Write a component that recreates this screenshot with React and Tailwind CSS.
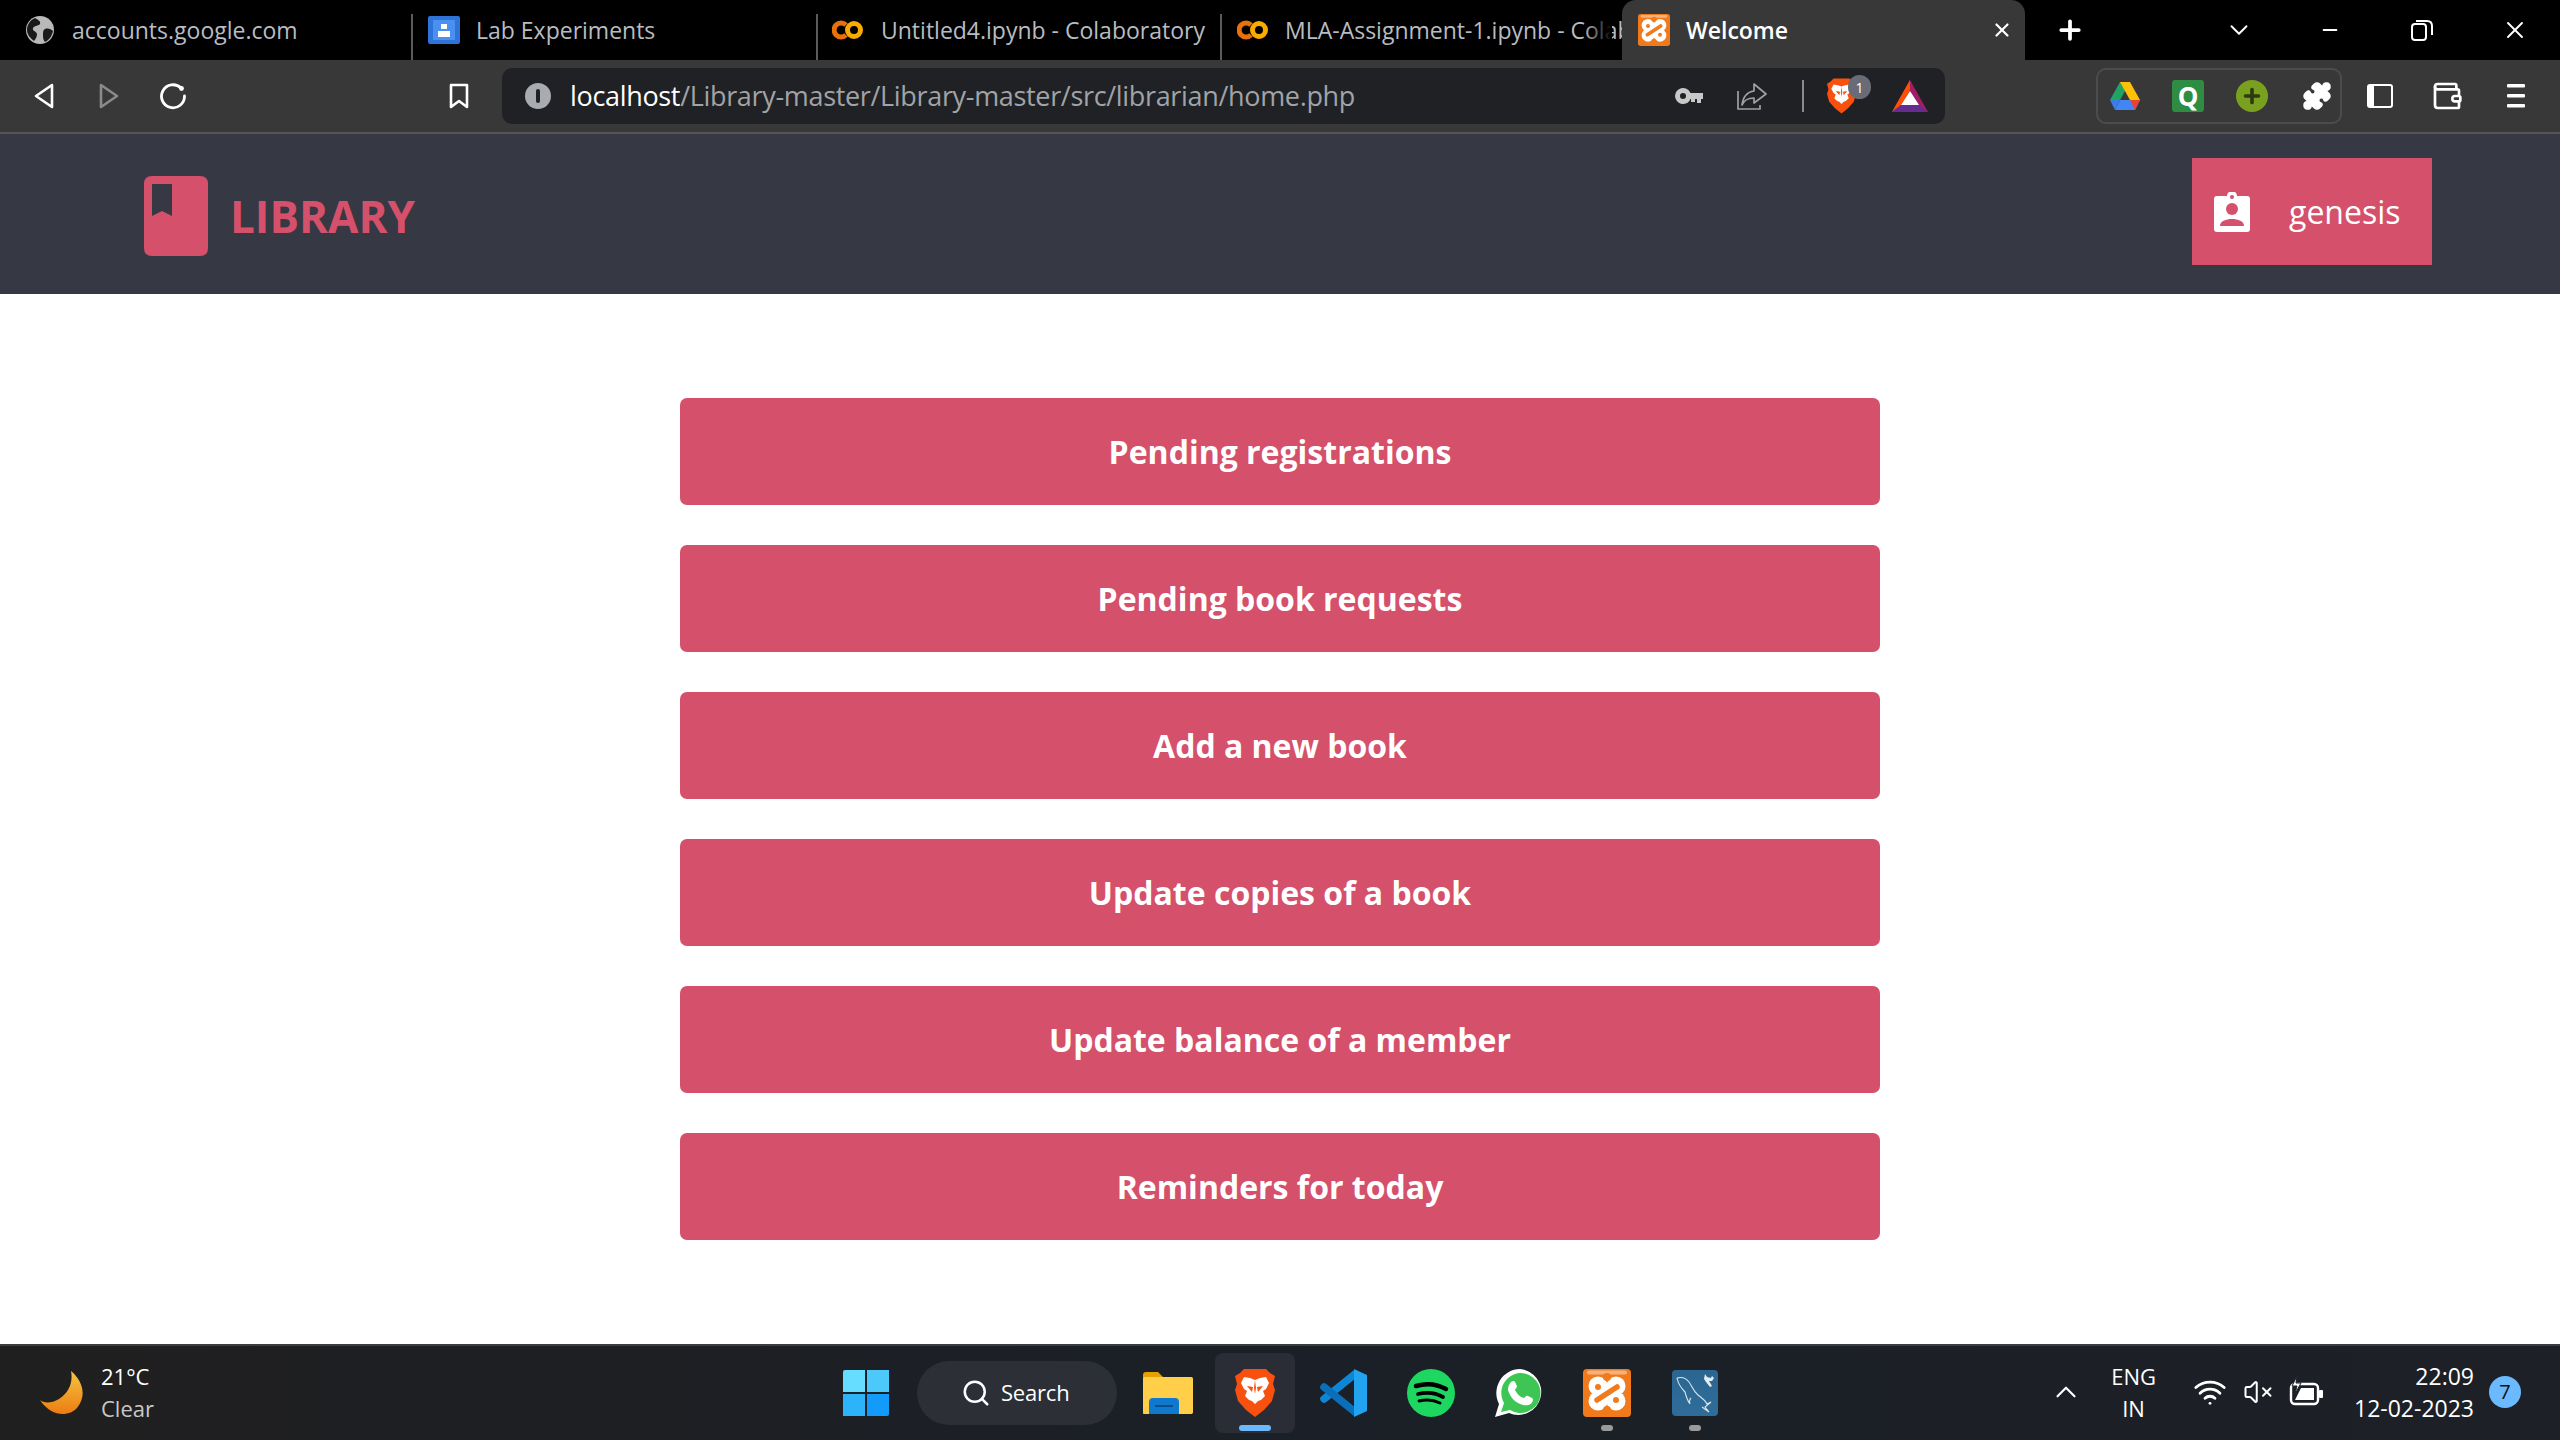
import { Plus, X, ChevronDown, ChevronUp, Minus, Search, Wifi, VolumeX, Puzzle, Wallet } from 'lucide-react';

const font = { open: 'font-["Open_Sans",sans-serif]' };

const Globe = () => (
  <svg viewBox="0 0 28 28" className="w-7 h-7 shrink-0">
    <circle cx="14" cy="14" r="14" fill="#b9b9b9" />
    <path d="M9 2c3 2 6 3 5 6-1 2-5 1-7 4-1 3 3 3 4 6 0 2-1 5-3 7-4-3-7-7-7-11C1 9 4 4 9 2zM19 13c3-1 6 0 8 2-1 5-4 9-8 11-2-2-2-5-2-7 0-3 0-5 2-6z" fill="#1a1a1a" />
  </svg>
);

const Contacts = () => (
  <svg viewBox="0 0 32 28" className="w-8 h-7 shrink-0">
    <rect width="32" height="28" rx="2" fill="#2f73d9" />
    <rect x="5" y="4" width="22" height="20" fill="#4a90f0" />
    <rect x="13" y="8" width="6" height="5" fill="#fff" />
    <rect x="10" y="15" width="12" height="6" fill="#fff" />
  </svg>
);

const Colab = () => (
  <svg viewBox="0 0 32 20" className="w-8 h-5 shrink-0" fill="none">
    <path d="M14 5a7 7 0 1 0 0 10" stroke="#e8710a" strokeWidth="5" />
    <circle cx="22" cy="10" r="6.5" stroke="#f9ab00" strokeWidth="5" />
  </svg>
);

const Xampp = ({ className }) => (
  <svg viewBox="0 0 48 48" className={className}>
    <rect width="48" height="48" rx="4" fill="#f07a1c" />
    <rect x="4" y="1.5" width="40" height="4" rx="2" fill="#f7b27c" />
    <g fill="#fff">
      <circle cx="15" cy="17" r="9.5" />
      <circle cx="33" cy="17" r="9.5" />
      <circle cx="15" cy="32" r="9.5" />
      <circle cx="33" cy="32" r="9.5" />
      <rect x="12" y="14" width="24" height="21" />
    </g>
    <g fill="#f07a1c">
      <circle cx="24" cy="8" r="4" />
      <circle cx="24" cy="41" r="4" />
      <circle cx="3.5" cy="24.5" r="3.5" />
      <circle cx="44.5" cy="24.5" r="3.5" />
      <circle cx="15" cy="18" r="3" />
      <circle cx="33" cy="31" r="3" />
    </g>
    <path d="M14 31L34 18" stroke="#f07a1c" strokeWidth="5.5" strokeLinecap="round" />
  </svg>
);

const Brave = ({ className }) => (
  <svg viewBox="0 0 40 48" className={className}>
    <path d="M9 0h22l4 4 5 3-2 8 2 6-3 11-8 9-9 7-9-7-8-9L0 21l2-6-2-8 5-3z" fill="#f8500f" />
    <path d="M9 8l6 1 5 2 5-2 6-1 3 6-3 6-3 2 2 5-4 4-3 1-3 3-3-3-3-1-4-4 2-5-3-2-3-6z" fill="#fff" />
    <path d="M12 17l6 1-1 5zM28 17l-6 1 1 5zM20 11v14l-1-6zM20 11v14l1-6z" fill="#f8500f" />
  </svg>
);

const Bat = () => (
  <svg viewBox="0 0 36 32" className="w-9 h-8 shrink-0">
    <path d="M18 0L36 32H0z" fill="#9e1f63" />
    <path d="M18 0L0 32l9-7 9-15z" fill="#ff5000" />
    <path d="M0 32h36l-9-7H9z" fill="#662d91" />
    <path d="M18 11l9 14H9z" fill="#fff" />
  </svg>
);

const Drive = () => (
  <svg viewBox="0 0 32 28" className="w-8 h-7 shrink-0">
    <path d="M11 0h10l-10 18H1z" fill="#1fa463" />
    <path d="M11 0h10l10 18H21z" fill="#ffc107" />
    <path d="M11 18h20l-5 10H6z" fill="#4285f4" />
    <path d="M1 18h10l-5 10z" fill="#3a7de8" />
    <path d="M21 18h10l-5 10z" fill="#ea4335" />
  </svg>
);

const Spotify = () => (
  <svg viewBox="0 0 48 48" className="w-12 h-12 shrink-0" fill="none">
    <circle cx="24" cy="24" r="24" fill="#1ed760" />
    <path d="M9 17c10-3 21-2 30 3" stroke="#000" strokeWidth="4.5" strokeLinecap="round" />
    <path d="M11 25c9-2 18-1 25 3" stroke="#000" strokeWidth="3.8" strokeLinecap="round" />
    <path d="M12 32c8-2 15-1 21 2" stroke="#000" strokeWidth="3" strokeLinecap="round" />
  </svg>
);

const Whatsapp = () => (
  <svg viewBox="0 0 48 48" className="w-12 h-12 shrink-0">
    <path d="M25 0a23 23 0 1 1-11 44L0 48l4-13A24 24 0 0 1 25 0z" fill="#fff" />
    <path d="M25 4a20 20 0 1 1-10 37l-9 2 3-9A20 20 0 0 1 25 4z" fill="#3ec654" />
    <path d="M18 12c2 0 2 1 4 5 0 2-2 3-2 4 2 4 5 7 9 8 1 0 2-3 4-2 4 2 5 2 5 4-1 5-6 6-10 5-8-2-13-8-15-15 0-5 3-9 5-9z" fill="#fff" />
  </svg>
);

const Mysql = () => (
  <svg viewBox="0 0 46 46" className="w-[46px] h-[46px] shrink-0" fill="none">
    <defs>
      <linearGradient id="mysql" x1="0" y1="0" x2="0" y2="1">
        <stop offset="0" stopColor="#2b6690" />
        <stop offset="1" stopColor="#2f6d99" />
      </linearGradient>
    </defs>
    <rect width="46" height="46" rx="4" fill="url(#mysql)" />
    <path d="M5 8c4-1 9 0 12 4 3 4 4 9 9 13 4 3 8 6 9 9l4-2-6 5 4 5-7-5M5 8c1 5 4 10 8 14 1 4 2 8 5 12-1-3 0-5 1-6" stroke="#d9e6ee" strokeWidth="1.1" />
    <path d="M33 4l2 3 4 1 1-2 2 2-2 3-3 0 3 5-2 1-4-5-2-3z" fill="#e4edf3" />
  </svg>
);

const Folder = () => (
  <svg viewBox="0 0 50 42" className="w-[50px] h-[42px] shrink-0">
    <path d="M0 3q0-3 3-3h12l5 5h27q3 0 3 3v31q0 3-3 3H0z" fill="#e6a100" />
    <rect y="5" width="50" height="37" rx="2" fill="#ffcf4a" />
    <path d="M6 42V30q0-4 4-4h22q4 0 4 4v12z" fill="#0f79d0" />
    <rect x="12" y="33" width="18" height="2" fill="#0a4f8c" />
  </svg>
);

const Moon = () => (
  <svg viewBox="0 0 45 44" className="w-[45px] h-11 shrink-0">
    <defs>
      <linearGradient id="moon" x1="0" y1="0" x2="0" y2="1">
        <stop offset="0" stopColor="#f5c542" />
        <stop offset="1" stopColor="#ec7c12" />
      </linearGradient>
    </defs>
    <path d="M31 0c12 10 16 25 6 37-8 9-26 9-37-8 3 3 11 4 19-1C30 21 33 10 31 0z" fill="url(#moon)" />
  </svg>
);

const Win = () => (
  <div className="grid grid-cols-2 gap-[2px] w-[46px] h-[46px] shrink-0">
    <div className="bg-[#66dcff] rounded-tl-[2px]" />
    <div className="bg-[#4cc8fb]" />
    <div className="bg-[#2cb4fb]" />
    <div className="bg-[#139bfb] rounded-br-[2px]" />
  </div>
);

const Vscode = () => (
  <svg viewBox="0 0 48 48" className="w-12 h-12 shrink-0" fill="none">
    <path d="M5 30L36 5" stroke="#0d86d6" strokeWidth="7.5" strokeLinecap="round" />
    <path d="M5 18l31 25" stroke="#0a6fb8" strokeWidth="7.5" strokeLinecap="round" />
    <path d="M35 0l13 6v36l-13 6z" fill="#22a3f0" />
  </svg>
);

const Tab = ({ icon, label, width, pad, divider, fade }) => (
  <div className={`flex items-center h-full relative ${width}`}>
    <div className={`flex items-center overflow-hidden w-full ${pad}`}>
      {icon}
      <span className="text-[23px] text-[#b9bcc0] whitespace-nowrap">{label}</span>
    </div>
    {fade && <div className="absolute right-[10px] top-0 bottom-0 w-[28px] bg-gradient-to-r from-transparent to-black" />}
    {divider && <div className="absolute right-0 top-[14px] bottom-0 w-[2px] bg-[#5b5b5b]" />}
  </div>
);

const TabBar = () => (
  <div className="h-[60px] bg-black flex items-stretch shrink-0">
    <Tab icon={<Globe />} label="accounts.google.com" width="w-[413px]" pad="pl-[26px] gap-[18px] pr-3" divider />
    <Tab icon={<Contacts />} label="Lab Experiments" width="w-[405px]" pad="pl-[15px] gap-[16px] pr-3" divider />
    <Tab icon={<Colab />} label="Untitled4.ipynb - Colaboratory" width="w-[404px]" pad="pl-[14px] gap-[17px] pr-2" divider />
    <Tab icon={<Colab />} label="MLA-Assignment-1.ipynb - Colab" width="w-[400px]" pad="pl-[15px] gap-[16px] pr-[10px]" fade />
    <div className="w-[403px] bg-[#383838] rounded-t-[14px] flex items-center pl-[16px] pr-[12px] gap-[16px]">
      <Xampp className="w-8 h-8 shrink-0" />
      <span className="text-[23px] font-semibold text-white flex-1">Welcome</span>
      <X size={22} strokeWidth={2.4} className="text-white" />
    </div>
    <div className="w-[30px]" />
    <Plus size={30} strokeWidth={3} className="text-white self-center" />
    <div className="flex-1 flex items-center justify-end pr-[31px]">
      <ChevronDown size={30} strokeWidth={1.5} className="text-white mr-[65px]" />
      <Minus size={22} strokeWidth={2} className="text-white mr-[70px]" />
      <svg viewBox="0 0 22 22" className="w-[22px] h-[22px] mr-[68px]" fill="none" stroke="#fff" strokeWidth="2">
        <rect x="1" y="5" width="14" height="16" rx="3" />
        <path d="M5 2h11q5 0 5 5v9" />
      </svg>
      <X size={28} strokeWidth={1.6} className="text-white" />
    </div>
  </div>
);

const Toolbar = () => (
  <div className="h-[74px] bg-[#383838] border-b-2 border-[#555] flex items-start pt-2 shrink-0">
    <div className="flex items-center h-14 pl-[34px] text-white">
      <svg viewBox="0 0 20 26" className="w-5 h-[26px]" fill="none" stroke="#fff" strokeWidth="2.6" strokeLinejoin="round">
        <path d="M18 2L2 13l16 11z" />
      </svg>
      <svg viewBox="0 0 20 26" className="w-5 h-[26px] ml-[45px]" fill="none" stroke="#8a8a8a" strokeWidth="2.6" strokeLinejoin="round">
        <path d="M2 2l16 11L2 24z" />
      </svg>
      <svg viewBox="0 0 28 28" className="w-7 h-7 ml-[40px]" fill="none" stroke="#fff" strokeWidth="2.8" strokeLinecap="round">
        <path d="M22 6A11.5 11.5 0 1 0 25.5 14" />
        <circle cx="22.5" cy="6.5" r="2.4" fill="#fff" stroke="none" />
      </svg>
      <svg viewBox="0 0 20 26" className="w-5 h-[26px] ml-[262px]" fill="none" stroke="#fff" strokeWidth="2.6" strokeLinejoin="round">
        <path d="M2 2h16v22l-8-6-8 6z" />
      </svg>
    </div>
    <div className="ml-[33px] w-[1443px] h-14 bg-[#202124] rounded-[10px] flex items-center pl-[23px]">
      <div className="w-[26px] h-[26px] rounded-full bg-[#a8abb0] flex items-center justify-center shrink-0">
        <div className="w-[4px] h-[14px] bg-[#202124] rounded-sm" />
      </div>
      <span className="ml-[19px] text-[27px] tracking-[-0.33px] text-[#a0a3a7] whitespace-nowrap w-[1105px]">
        <span className="text-white">localhost</span>/Library-master/Library-master/src/librarian/home.php
      </span>
      <svg viewBox="0 0 28 16" className="w-7 h-4 shrink-0" fill="#c8c8c8">
        <path d="M8 0a8 8 0 1 1-7.5 10.5A8 8 0 0 1 8 0zm0 5a3 3 0 1 0 0 6 3 3 0 0 0 0-6zM14 5h14v6h-2v4h-4v-4h-2v3h-4v-3h-2z" />
      </svg>
      <svg viewBox="0 0 30 28" className="w-[30px] h-7 ml-[34px] shrink-0" fill="none" stroke="#a0a0a0" strokeWidth="1.7" strokeLinejoin="round">
        <path d="M1 9v18h22v-4" />
        <path d="M17 2l12 10-12 9v-5c-6 0-10 2-12 7 1-8 5-13 12-14z" />
      </svg>
      <div className="w-[2px] h-8 bg-[#8a8a8a] ml-[35px] shrink-0" />
      <div className="relative ml-[23px] shrink-0">
        <Brave className="w-[29px] h-9" />
        <span className="absolute -top-[3px] -right-[15px] w-[23px] h-6 rounded-full bg-[#696b76] text-[14px] text-white flex items-center justify-center">1</span>
      </div>
      <div className="ml-[36px]"><Bat /></div>
    </div>
    <div className="ml-[151px] w-[246px] h-14 border-2 border-[#4c4c4c] rounded-[10px] flex items-center pl-[11px] shrink-0">
      <Drive />
      <div className="ml-[31px] w-8 h-8 bg-[#2f8c43] rounded-[3px] flex items-center justify-center text-white text-[26px] font-bold">Q</div>
      <div className="ml-[32px] w-8 h-8 rounded-full bg-[#7aa020] flex items-center justify-center">
        <Plus size={22} strokeWidth={4} className="text-[#2d3a12]" />
      </div>
      <Puzzle size={30} fill="#fff" className="ml-[34px] text-white" />
    </div>
    <div className="flex items-center h-14 text-white">
      <svg viewBox="0 0 26 24" className="w-[26px] h-6 ml-[25px]" fill="none">
        <rect x="1" y="1" width="24" height="22" rx="2" stroke="#fff" strokeWidth="2" />
        <rect x="1" y="1" width="6" height="22" fill="#fff" />
      </svg>
      <Wallet size={32} strokeWidth={2} className="ml-[38px]" />
      <svg viewBox="0 0 18 24" className="w-[18px] h-6 ml-[44px]" fill="#fff">
        <rect width="18" height="3.5" rx="1" />
        <rect y="10" width="18" height="3.5" rx="1" />
        <rect y="20" width="18" height="3.5" rx="1" />
      </svg>
    </div>
  </div>
);

const Header = () => (
  <div className={`h-[160px] bg-[#363844] flex justify-between shrink-0 pl-[144px] pr-[128px] ${font.open}`}>
    <div className="flex items-center gap-[22px] h-fit mt-[42px]">
      <svg viewBox="0 0 64 80" className="w-16 h-20">
        <path d="M8 0h48q8 0 8 8v64q0 8-8 8H8q-8 0-8-8V8q0-8 8-8z" fill="#d5506a" />
        <path d="M8 8h20v32l-10-5-10 5z" fill="#363844" />
      </svg>
      <span className="text-[44px] font-bold text-[#d5506a] leading-none">LIBRARY</span>
    </div>
    <div className="mt-[24px] w-[240px] h-[107px] bg-[#d5506a] flex items-center pl-[22px] gap-[39px] text-white">
      <svg viewBox="0 0 36 40" className="w-9 h-10 shrink-0">
        <path d="M3 4h10a5 5 0 0 1 10 0h10q3 0 3 3v30q0 3-3 3H3q-3 0-3-3V7q0-3 3-3z" fill="#fff" />
        <circle cx="18" cy="5" r="2" fill="#d5506a" />
        <circle cx="18" cy="17" r="6" fill="#d5506a" />
        <path d="M6 34c0-5 6-7 12-7s12 2 12 7z" fill="#d5506a" />
      </svg>
      <span className="text-[32px]">genesis</span>
    </div>
  </div>
);

const items = [
  'Pending registrations',
  'Pending book requests',
  'Add a new book',
  'Update copies of a book',
  'Update balance of a member',
  'Reminders for today',
];

const Taskbar = () => (
  <div className="h-[96px] border-t-2 border-[#3a3c40] bg-gradient-to-r from-[#201f20] via-[#1b1f27] to-[#1d2026] flex items-center shrink-0 relative">
    <div className="flex items-center pl-[40px] w-[843px] shrink-0">
      <Moon />
      <div className="ml-4 text-[22px] leading-[32px] -mt-[2px]">
        <div className="text-white">21°C</div>
        <div className="text-[#c8c8c8]">Clear</div>
      </div>
    </div>
    <Win />
    <div className="ml-[28px] w-[200px] h-16 bg-[#2c2f36] rounded-full flex items-center pl-[44px] gap-[10px] text-white shrink-0">
      <Search size={30} strokeWidth={2} />
      <span className="text-[22px] tracking-[-0.2px] -mt-[2px]">Search</span>
    </div>
    <div className="ml-[26px]"><Folder /></div>
    <div className="relative ml-[22px] w-20 h-20 rounded-lg bg-[#2a2d35] flex items-center justify-center shrink-0">
      <Brave className="w-10 h-12" />
      <div className="absolute bottom-[2px] left-6 w-8 h-[6px] rounded-full bg-[#6bb9ff]" />
    </div>
    <div className="ml-6"><Vscode /></div>
    <div className="ml-10"><Spotify /></div>
    <div className="ml-10"><Whatsapp /></div>
    <div className="ml-10 relative">
      <Xampp className="w-12 h-12 shrink-0" />
      <div className="absolute -bottom-[14px] left-[18px] w-3 h-[6px] rounded-full bg-[#9a9a9a]" />
    </div>
    <div className="ml-[41px] relative">
      <Mysql />
      <div className="absolute -bottom-[15px] left-[17px] w-3 h-[6px] rounded-full bg-[#9a9a9a]" />
    </div>
    <div className="flex-1" />
    <div className="flex items-center text-white pr-[39px] -mt-[2px]">
      <ChevronUp size={34} strokeWidth={1.5} />
      <div className="ml-[28px] text-[22px] leading-[32px] text-center">
        <div>ENG</div>
        <div>IN</div>
      </div>
      <Wifi size={34} strokeWidth={2} className="ml-[37px]" />
      <VolumeX size={30} strokeWidth={1.6} className="ml-[16px]" />
      <svg viewBox="0 0 34 32" className="w-[34px] h-8 ml-[16px]" fill="none">
        <rect x="2" y="8" width="27" height="20" rx="4" stroke="#fff" strokeWidth="2.4" />
        <path d="M6 24l6-12h13v12z" fill="#fff" />
        <rect x="30" y="14" width="4" height="8" rx="1" fill="#fff" />
        <path d="M8 0L3 10h5l-2 8 6-11H7z" fill="#fff" stroke="#1d2026" strokeWidth="1" />
      </svg>
      <div className="ml-[31px] text-[23px] leading-[32px] text-right">
        <div>22:09</div>
        <div>12-02-2023</div>
      </div>
      <div className="ml-[15px] w-8 h-8 rounded-full bg-[#6bb9ff] text-[#111] text-[20px] flex items-center justify-center">7</div>
    </div>
  </div>
);

export default function App() {
  return (
    <div className={`w-[2560px] h-[1440px] flex flex-col overflow-hidden bg-white ${font.open}`}>
      <TabBar />
      <Toolbar />
      <Header />
      <main className="flex-1 flex flex-col items-center pt-[104px] gap-10">
        {items.map((item) => (
          <button key={item} className="w-[1200px] h-[107px] shrink-0 bg-[#d5506a] rounded-[7px] text-white text-[32px] font-bold">
            {item}
          </button>
        ))}
      </main>
      <Taskbar />
    </div>
  );
}
